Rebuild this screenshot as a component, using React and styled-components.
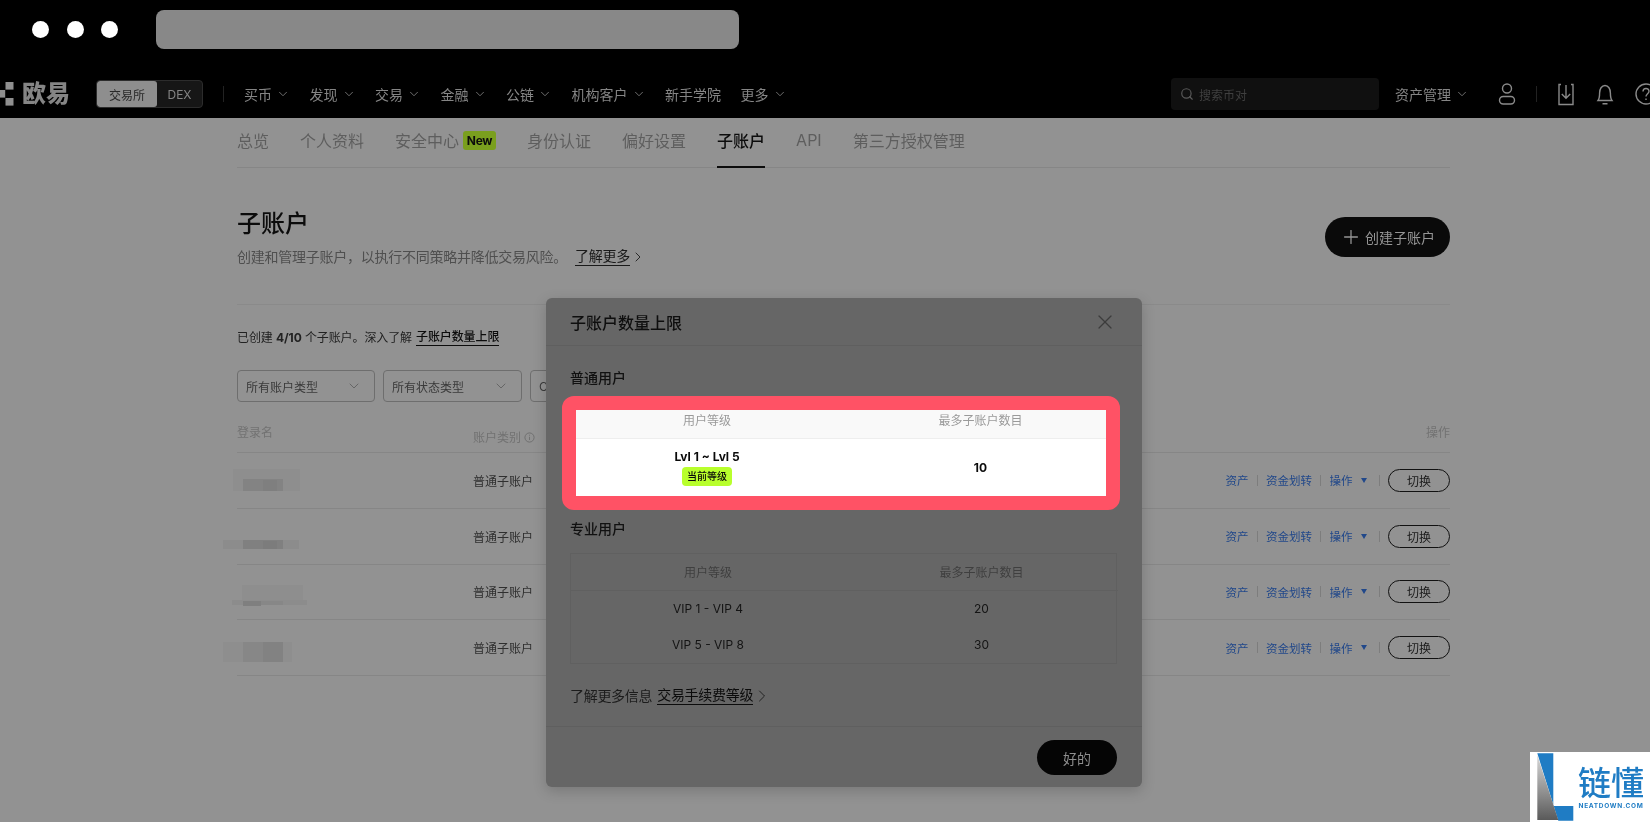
import styled, { createGlobalStyle } from "styled-components";
import { ChevronDown, ChevronRight, Plus, Search, X } from "lucide-react";

const GlobalStyle = createGlobalStyle`
  html, body {
    margin: 0;
    padding: 0;
    height: 100%;
    overflow: hidden;
    background: #929292;
    font-family: "Inter", "Noto Sans CJK SC", sans-serif;
  }
  * { box-sizing: border-box; }
`;

const Page = styled.div`
  position: relative;
  width: 1650px;
  height: 822px;
  overflow: hidden;
  background: #929292;
  filter: blur(0.5px);
`;

/* fake browser bar */
const Chrome = styled.div`
  height: 59px;
  background: #000;
  display: flex;
  align-items: center;
  padding: 0 0 0 32px;
`;
const Dots = styled.div`
  display: flex;
  gap: 17.5px;
  margin-right: 38px;
`;
const Dot = styled.span`
  width: 17px;
  height: 17px;
  border-radius: 50%;
  background: #fff;
`;
const AddressBar = styled.div`
  width: 583px;
  height: 39px;
  border-radius: 8px;
  background: #888;
`;

const Nav = styled.header`
  height: 59px;
  padding-top: 11px;
  background: #000;
  display: flex;
  align-items: center;
  color: #858585;
  font-size: 14px;
`;
const LogoMark = styled.svg`
  width: 14px;
  height: 24px;
  margin: 0 8px 0 0;
  flex: none;
`;
const LogoText = styled.div`
  width: 48px;
  font-size: 24px;
  line-height: 28px;
  font-weight: 900;
  color: #858585;
  white-space: nowrap;
  margin-right: 26px;
`;
const Segment = styled.div`
  display: flex;
  width: 107px;
  height: 28px;
  border: 1px solid #2c2c2c;
  border-radius: 4px;
  background: #161616;
  overflow: hidden;
  font-size: 12px;
`;
const SegmentItem = styled.div`
  flex: ${(p) => (p.$active ? "0 0 60px" : "1")};
  display: flex;
  align-items: center;
  justify-content: center;
  background: ${(p) => (p.$active ? "#8e8e8e" : "transparent")};
  color: ${(p) => (p.$active ? "#2a2a2a" : "#858585")};
  border-radius: ${(p) => (p.$active ? "3px" : "0")};
`;
const NavDivider = styled.span`
  width: 1px;
  height: 16px;
  margin: 0 ${(p) => p.$right || 20}px 0 ${(p) => p.$left || 20}px;
  background: #222;
  flex: none;
`;
const NavItems = styled.nav`
  display: flex;
  gap: 19.5px;
`;
const NavItem = styled.div`
  display: flex;
  align-items: center;
  gap: 4px;
  white-space: nowrap;
  svg {
    width: 14px;
    height: 14px;
    stroke-width: 1.4;
  }
`;
const NavRight = styled.div`
  margin-left: auto;
  margin-right: -7px;
  display: flex;
  align-items: center;
`;
const SearchBox = styled.div`
  width: 208px;
  height: 32px;
  margin-right: 16px;
  border-radius: 4px;
  background: #101010;
  display: flex;
  align-items: center;
  gap: 5px;
  padding-left: 9px;
  font-size: 12px;
  color: #3f3f3f;
  svg {
    width: 14px;
    height: 14px;
    color: #5a5a5a;
  }
`;
const NavIcon = styled.svg`
  width: ${(p) => p.$w || 22}px;
  height: 24px;
  margin-left: ${(p) => p.$ml || 0}px;
  fill: none;
  stroke: #8a8a8a;
  stroke-width: 1.4;
  flex: none;
`;

const Main = styled.main`
  padding-left: 237px;
  width: 1450px;
`;
const Tabs = styled.div`
  display: flex;
  gap: 31px;
  height: 50px;
  border-bottom: 1px solid #868686;
`;
const Tab = styled.div`
  height: 50px;
  display: flex;
  align-items: center;
  gap: 4px;
  padding-bottom: 4px;
  font-size: 16px;
  color: ${(p) => (p.$active ? "#0c0c0c" : "#5e5e5e")};
  font-weight: ${(p) => (p.$active ? 500 : 400)};
  border-bottom: 2px solid ${(p) => (p.$active ? "#0c0c0c" : "transparent")};
  white-space: nowrap;
`;
const NewBadge = styled.span`
  height: 19px;
  width: 33px;
  border-radius: 3px;
  background: #7a9f1e;
  color: #0c0c0c;
  font-size: 12px;
  font-weight: 700;
  line-height: 19px;
  text-align: center;
  letter-spacing: -0.3px;
`;

const Head = styled.section`
  display: flex;
  justify-content: space-between;
  align-items: flex-start;
  padding: 40px 0 37px;
  border-bottom: 1px solid #8a8a8a;
`;
const Title = styled.h1`
  margin: 0 0 7px;
  font-size: 24px;
  line-height: 32px;
  font-weight: 500;
  color: #0c0c0c;
`;
const Desc = styled.p`
  margin: 0;
  font-size: 14px;
  line-height: 20px;
  letter-spacing: -0.25px;
  color: #4f4f4f;
  display: flex;
  align-items: center;
`;
const StrongLink = styled.span`
  color: ${(p) => p.$color || "#0c0c0c"};
  border-bottom: 1px solid ${(p) => p.$color || "#0c0c0c"};
  line-height: 1.2;
  margin-left: ${(p) => p.$ml || 0}px;
  font-weight: ${(p) => p.$weight || 400};
`;
const CreateButton = styled.button`
  width: 125px;
  height: 40px;
  margin-top: 9px;
  border: 0;
  border-radius: 20px;
  background: #0a0a0a;
  color: #959595;
  font: inherit;
  font-size: 14px;
  display: flex;
  align-items: center;
  justify-content: center;
  gap: 3px;
  svg {
    width: 22px;
    height: 22px;
    stroke-width: 1.4;
  }
`;
const Summary = styled.div`
  margin-top: 23px;
  font-size: 12px;
  line-height: 20px;
  letter-spacing: -0.1px;
  color: #222;
  display: flex;
  align-items: center;
  gap: 4px;
  b {
    font-weight: 700;
  }
`;
const Filters = styled.div`
  display: flex;
  gap: 8px;
  margin-top: 22px;
`;
const Select = styled.div`
  width: ${(p) => p.$w || 138}px;
  height: 32px;
  padding: 0 8px;
  border: 1px solid #6e6e6e;
  border-radius: 4px;
  display: flex;
  align-items: center;
  justify-content: space-between;
  font-size: 12px;
  color: #3a3a3a;
  svg {
    width: 16px;
    height: 16px;
    stroke-width: 1.2;
    color: #5a5a5a;
    margin-right: 4px;
  }
`;

const TableHead = styled.div`
  display: grid;
  grid-template-columns: 236px 1fr auto;
  height: 51px;
  padding-top: 21px;
  line-height: 20px;
  font-size: 12px;
  color: #727272;
  border-bottom: 1px solid #868686;
`;
const TypeHead = styled.div`
  display: flex;
  align-items: center;
  gap: 3px;
  svg {
    width: 11px;
    height: 11px;
  }
`;
const Row = styled.div`
  display: grid;
  grid-template-columns: 236px 1fr auto;
  align-items: center;
  height: 55.75px;
  font-size: 12px;
  color: #2f2f2f;
  border-bottom: 1px solid #868686;
`;
const NameCell = styled.div`
  position: relative;
  height: 100%;
`;
const Smudge = styled.span`
  position: absolute;
  left: ${(p) => p.$x}px;
  top: ${(p) => p.$y}px;
  width: ${(p) => p.$w}px;
  height: ${(p) => p.$h}px;
  background: ${(p) => p.$c};
`;
const Actions = styled.div`
  display: flex;
  align-items: center;
  font-size: 11.5px;
  color: #21488a;
`;
const ActionSep = styled.span`
  width: 1px;
  height: 11px;
  background: #7d7d7d;
  margin: 0 ${(p) => p.$r || 8.5}px 0 ${(p) => p.$l || 8}px;
`;
const Caret = styled.span`
  width: 0;
  height: 0;
  margin-left: 8px;
  border-left: 3.5px solid transparent;
  border-right: 3.5px solid transparent;
  border-top: 5px solid #21488a;
`;
const SwitchButton = styled.button`
  width: 62px;
  height: 23px;
  border: 1px solid #111;
  border-radius: 12px;
  background: transparent;
  color: #1a1a1a;
  font: inherit;
  font-size: 12px;
  padding: 0;
`;

const Modal = styled.div`
  position: absolute;
  left: 546px;
  top: 298px;
  width: 596px;
  height: 489px;
  border-radius: 6px;
  background: #666;
  box-shadow: 0 4px 14px rgba(0, 0, 0, 0.18);
`;
const ModalHeader = styled.div`
  height: 48px;
  padding: 0 24px;
  display: flex;
  align-items: center;
  justify-content: space-between;
  border-bottom: 1px solid #5f5f5f;
  font-size: 16px;
  font-weight: 500;
  color: #0e0e0e;
  svg {
    width: 24px;
    height: 24px;
    margin-right: 1px;
    stroke-width: 1.2;
    color: #3c3c3c;
  }
`;
const ModalBody = styled.div`
  padding: 22px 24px 22px;
  height: 381px;
  border-bottom: 1px solid #5f5f5f;
`;
const GroupTitle = styled.div`
  font-size: 14px;
  line-height: 20px;
  font-weight: 500;
  color: #111;
  margin-top: ${(p) => p.$mt || 0}px;
`;
const Highlight = styled.div`
  width: 558px;
  height: 114px;
  margin: 8px 0 0 -8px;
  border: 14px solid #ff5265;
  border-radius: 12px;
  background: #fff;
  overflow: hidden;
`;
const LimitTable = styled.div`
  width: 547px;
  display: grid;
  grid-template-columns: 274px 273px;
  font-size: 12px;
  text-align: center;
  margin-left: ${(p) => (p.$bright ? "-6px" : "0")};
  margin-top: ${(p) => (p.$bright ? "0" : "14px")};
  color: ${(p) => (p.$bright ? "#0a0a0a" : "#141414")};
  border: ${(p) => (p.$bright ? "0" : "1px solid #606060")};
`;
const LimitHead = styled.div`
  height: ${(p) => (p.$bright ? "29px" : "37px")};
  line-height: ${(p) => (p.$bright ? "22px" : "37px")};
  background: ${(p) => (p.$bright ? "#f9f9f9" : "transparent")};
  color: ${(p) => (p.$bright ? "#9a9a9a" : "#3f3f3f")};
  border-bottom: 1px solid ${(p) => (p.$bright ? "#eee" : "#606060")};
`;
const LimitCell = styled.div`
  height: ${(p) => p.$h || 36}px;
  padding-bottom: ${(p) => (p.$h ? 0 : 2)}px;
  display: flex;
  flex-direction: column;
  align-items: center;
  justify-content: center;
  font-weight: ${(p) => (p.$bold ? 700 : 400)};
`;
const CurrentBadge = styled.span`
  margin-top: 3px;
  height: 19px;
  padding: 0 5px;
  border-radius: 4px;
  background: #b8ff2c;
  font-size: 10px;
  line-height: 19px;
  font-weight: 500;
`;
const MoreLine = styled.div`
  margin-top: 22px;
  font-size: 14px;
  line-height: 20px;
  letter-spacing: -0.3px;
  color: #1c1c1c;
  display: flex;
  align-items: center;
  svg {
    width: 20px;
    height: 20px;
    margin-left: -1px;
    stroke-width: 1.1;
  }
`;
const ModalFooter = styled.div`
  display: flex;
  justify-content: flex-end;
  padding: 13px 25px 13px 24px;
`;
const OkButton = styled.button`
  width: 80px;
  height: 35px;
  border: 0;
  border-radius: 18px;
  background: #050505;
  color: #8e8e8e;
  font: inherit;
  font-size: 14px;
`;

const Watermark = styled.div`
  position: absolute;
  right: 0;
  bottom: 0;
  width: 120px;
  height: 70px;
  background: #fff;
  display: flex;
`;
const WatermarkLogo = styled.svg`
  width: 48px;
  height: 70px;
  flex: none;
`;
const WatermarkText = styled.div`
  color: #1f7cc4;
  text-align: center;
  width: 66px;
  padding-top: 9px;
  font-size: 33px;
  line-height: 44px;
  font-weight: 500;
  white-space: nowrap;
  small {
    display: block;
    margin-top: -3px;
    font-size: 6.5px;
    line-height: 8px;
    font-weight: 700;
    letter-spacing: 0.7px;
  }
`;

const navItems = [
  ["买币", true],
  ["发现", true],
  ["交易", true],
  ["金融", true],
  ["公链", true],
  ["机构客户", true],
  ["新手学院", false],
  ["更多", true],
];
const tabs = ["总览", "个人资料", "安全中心", "身份认证", "偏好设置", "子账户", "API", "第三方授权管理"];

// blurred login names, each one a few mosaic blocks
const names = [
  [[-4, 16, 67, 22, "#8e8e8e"], [6, 26, 40, 12, "#838383"], [26, 27, 14, 11, "#7f7f7f"]],
  [[-14, 31, 76, 9, "#8c8c8c"], [6, 31, 40, 9, "#808080"], [26, 32, 14, 8, "#7c7c7c"]],
  [[5, 20, 61, 20, "#8e8e8e"], [-5, 35, 75, 5, "#8c8c8c"], [6, 36, 18, 5, "#7f7f7f"], [24, 36, 22, 4, "#878787"]],
  [[-14, 22, 69, 20, "#8e8e8e"], [6, 22, 40, 20, "#878787"], [26, 22, 20, 20, "#828282"]],
];

function Rows() {
  return names.map((blocks, i) => (
    <Row key={i}>
      <NameCell>
        {blocks.map(([x, y, w, h, c], j) => (
          <Smudge key={j} $x={x} $y={y} $w={w} $h={h} $c={c} />
        ))}
      </NameCell>
      <div>普通子账户</div>
      <Actions>
        <span>资产</span>
        <ActionSep />
        <span>资金划转</span>
        <ActionSep />
        <span>操作</span>
        <Caret />
        <ActionSep $l={12} />
        <SwitchButton>切换</SwitchButton>
      </Actions>
    </Row>
  ));
}

export default function App() {
  return (
    <Page>
      <GlobalStyle />
      <Chrome>
        <Dots>
          <Dot />
          <Dot />
          <Dot />
        </Dots>
        <AddressBar />
      </Chrome>
      <Nav>
        <LogoMark viewBox="0 0 14 24" fill="#8f8f8f">
          <rect x="5.5" y="0" width="8" height="7.6" />
          <rect x="-2" y="8" width="7.2" height="7.6" />
          <rect x="5.5" y="16" width="8" height="7.6" />
        </LogoMark>
        <LogoText>欧易</LogoText>
        <Segment>
          <SegmentItem $active>交易所</SegmentItem>
          <SegmentItem>DEX</SegmentItem>
        </Segment>
        <NavDivider />
        <NavItems>
          {navItems.map(([label, more]) => (
            <NavItem key={label}>
              {label}
              {more && <ChevronDown />}
            </NavItem>
          ))}
        </NavItems>
        <NavRight>
          <SearchBox>
            <Search />
            搜索币对
          </SearchBox>
          <NavItem>
            资产管理
            <ChevronDown />
          </NavItem>
          <NavIcon viewBox="0 0 22 24" $ml={27}>
            <circle cx="11" cy="6.5" r="4.5" />
            <rect x="3.5" y="14.5" width="15" height="7.5" rx="3.7" />
          </NavIcon>
          <NavDivider $left={18} $right={19} />
          <NavIcon viewBox="0 0 20 24" $w={20}>
            <path d="M5 2.500H3v20h14v-20h-2M10 3v13M5.800 12l4.200 4.200 4.200-4.200" />
          </NavIcon>
          <NavIcon viewBox="0 0 22 24" $ml={18}>
            <path d="M4 18.500c1.500-2 1.600-4 1.600-7.500 0-4 2-7.500 5.400-7.500s5.400 3.500 5.400 7.500c0 3.500.1 5.500 1.600 7.500zM8.500 21.800h5" />
          </NavIcon>
          <NavIcon viewBox="0 0 22 24" $ml={19} $w={22}>
            <circle cx="11" cy="12" r="10" />
            <path d="M8 9.500c0-4 6-4 6-.3 0 2.500-3 2.500-3 5.300M11 16.500v1.500" />
          </NavIcon>
        </NavRight>
      </Nav>

      <Main>
        <Tabs>
          {tabs.map((t) => (
            <Tab key={t} $active={t === "子账户"}>
              {t}
              {t === "安全中心" && <NewBadge>New</NewBadge>}
            </Tab>
          ))}
        </Tabs>
        <Head>
          <div>
            <Title>子账户</Title>
            <Desc>
              创建和管理子账户，以执行不同策略并降低交易风险。
              <StrongLink $ml={8} $color="#1a1a1a">了解更多</StrongLink>
              <ChevronRight size={16} strokeWidth={1.3} color="#1a1a1a" />
            </Desc>
          </div>
          <CreateButton>
            <Plus />
            创建子账户
          </CreateButton>
        </Head>
        <Summary>
          <span>
            已创建 <b>4/10</b> 个子账户。深入了解
          </span>
          <StrongLink $weight={500}>子账户数量上限</StrongLink>
        </Summary>
        <Filters>
          <Select>
            所有账户类型
            <ChevronDown />
          </Select>
          <Select $w={139}>
            所有状态类型
            <ChevronDown />
          </Select>
          <Select $w={150}>C</Select>
        </Filters>
        <TableHead>
          <div>登录名</div>
          <TypeHead>
            账户类别
            <svg viewBox="0 0 12 12" fill="none" stroke="#6d6d6d" strokeWidth="1">
              <circle cx="6" cy="6" r="5" />
              <path d="M6 5.200v3.500M6 3v1" />
            </svg>
          </TypeHead>
          <div>操作</div>
        </TableHead>
        <Rows />
      </Main>

      <Modal>
        <ModalHeader>
          子账户数量上限
          <X />
        </ModalHeader>
        <ModalBody>
          <GroupTitle>普通用户</GroupTitle>
          <Highlight>
            <LimitTable $bright>
              <LimitHead $bright>用户等级</LimitHead>
              <LimitHead $bright>最多子账户数目</LimitHead>
              <LimitCell $h={57} $bold>
                Lvl 1 ~ Lvl 5
                <CurrentBadge>当前等级</CurrentBadge>
              </LimitCell>
              <LimitCell $h={57} $bold>10</LimitCell>
            </LimitTable>
          </Highlight>
          <GroupTitle $mt={9}>专业用户</GroupTitle>
          <LimitTable>
            <LimitHead>用户等级</LimitHead>
            <LimitHead>最多子账户数目</LimitHead>
            <LimitCell>VIP 1 - VIP 4</LimitCell>
            <LimitCell>20</LimitCell>
            <LimitCell>VIP 5 - VIP 8</LimitCell>
            <LimitCell>30</LimitCell>
          </LimitTable>
          <MoreLine>
            了解更多信息
            <StrongLink $ml={5}>交易手续费等级</StrongLink>
            <ChevronRight />
          </MoreLine>
        </ModalBody>
        <ModalFooter>
          <OkButton>好的</OkButton>
        </ModalFooter>
      </Modal>

      <Watermark>
        <WatermarkLogo viewBox="0 0 48 70">
          <defs>
            <linearGradient id="wedge" x1="0" y1="0" x2="0" y2="1">
              <stop offset="0" stopColor="#d8d8d8" />
              <stop offset="1" stopColor="#5a5a5a" />
            </linearGradient>
          </defs>
          <path d="M7.300 1.300h16V54h20v14.700h-15z" fill="#1f7cc4" />
          <path d="M7.300 3v65h21z" fill="url(#wedge)" />
        </WatermarkLogo>
        <WatermarkText>
          链懂
          <small>NEATDOWN.COM</small>
        </WatermarkText>
      </Watermark>
    </Page>
  );
}
